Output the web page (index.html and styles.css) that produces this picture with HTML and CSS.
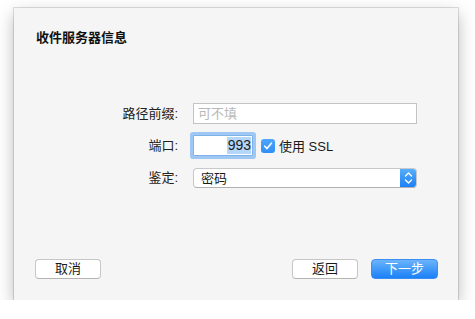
FILE: index.html
```html
<!DOCTYPE html>
<html lang="zh">
<head>
<meta charset="utf-8">
<link rel="stylesheet" href="styles.css">
</head>
<body>
<div class="sheet">
  <h1 class="title">收件服务器信息</h1>
  <div class="form">
    <label class="label">路径前缀:</label>
    <div class="field"><input class="text-input" type="text" placeholder="可不填"></div>
    <label class="label">端口:</label>
    <div class="field port-row">
      <div class="port-box"><span class="sel">993</span></div>
      <span class="check">
        <svg width="10" height="10" viewBox="0 0 10 10"><path d="M1.8 5.2 L4 7.6 L8.4 2.2" fill="none" stroke="#fff" stroke-width="1.6" stroke-linecap="round" stroke-linejoin="round"/></svg>
      </span>
      <span class="check-label">使用 SSL</span>
    </div>
    <label class="label">鉴定:</label>
    <div class="field">
      <div class="select">
        <span class="select-value">密码</span>
        <span class="select-arrows">
          <svg width="9" height="14" viewBox="0 0 9 14"><path d="M1.5 5 L4.5 2 L7.5 5 M1.5 9 L4.5 12 L7.5 9" fill="none" stroke="#fff" stroke-width="1.3" stroke-linecap="round" stroke-linejoin="round"/></svg>
        </span>
      </div>
    </div>
  </div>
  <div class="footer">
    <button class="btn">取消</button>
    <div class="spacer"></div>
    <button class="btn">返回</button>
    <button class="btn primary">下一步</button>
  </div>
</div>
</body>
</html>
```
FILE: styles.css
```css
html, body {
  margin: 0;
  padding: 0;
  background: #ffffff;
}
body {
  font-family: "Liberation Sans", "Noto Sans CJK SC", sans-serif;
  font-size: 13px;
  color: #1a1a1a;
  padding: 8px 0 0 14px;
}
.sheet {
  box-sizing: border-box;
  width: 444px;
  height: 292px;
  background: #f5f5f5;
  box-shadow: 0 0 0 1px rgba(0,0,0,0.12), 0 6px 16px rgba(0,0,0,0.28);
  display: flex;
  flex-direction: column;
  padding: 22px 20px 21px 21px;
}
.title {
  margin: 0;
  font-size: 13px;
  font-weight: bold;
  line-height: 16px;
  padding-left: 1px;
  color: #111;
}
.form {
  margin-top: 57px;
  margin-left: -7px;
  display: grid;
  grid-template-columns: 150px 224px;
  column-gap: 15px;
  row-gap: 11px;
  grid-auto-rows: 21px;
}
.label {
  text-align: right;
  line-height: 21px;
  color: #222;
}
.field {
  display: flex;
  align-items: center;
}
.text-input {
  box-sizing: border-box;
  width: 224px;
  height: 21px;
  border: 1px solid #c3c3c3;
  background: #fff;
  font: inherit;
  padding: 0 4px;
  outline: none;
  margin: 0;
}
.text-input::placeholder {
  color: #b8b8b8;
}
.port-box {
  box-sizing: border-box;
  width: 60px;
  height: 21px;
  background: #fff;
  border: 1px solid #7fb2ea;
  box-shadow: 0 0 0 3px rgba(88,160,240,0.55);
  border-radius: 1px;
  display: flex;
  justify-content: flex-end;
  align-items: center;
  padding-right: 1px;
  font-size: 14px;
}
.sel {
  background: #b4d6fb;
  line-height: 17px;
  padding: 0 0 0 1px;
}
.check {
  margin-left: 8px;
  width: 14px;
  height: 14px;
  border-radius: 3px;
  background: linear-gradient(#4ea6fd, #2f8ef7);
  display: flex;
  align-items: center;
  justify-content: center;
}
.check-label {
  margin-left: 4px;
  color: #1a1a1a;
  font-size: 13px;
}
.select {
  box-sizing: border-box;
  width: 224px;
  height: 20px;
  background: #fff;
  border: 1px solid #c8c8c8;
  border-bottom-color: #b0b0b0;
  border-radius: 4px;
  display: flex;
  align-items: center;
  overflow: hidden;
}
.select-value {
  flex: 1;
  padding-left: 7px;
}
.select-arrows {
  width: 16px;
  height: 100%;
  background: linear-gradient(#58aefb, #1b7ff6);
  display: flex;
  align-items: center;
  justify-content: center;
}
.footer {
  margin-top: auto;
  display: flex;
  align-items: center;
}
.spacer {
  flex: 1;
}
.btn {
  box-sizing: border-box;
  width: 66px;
  height: 20px;
  background: #fff;
  border: 1px solid #c6c6c6;
  border-bottom-color: #b4b4b4;
  border-radius: 4px;
  font: inherit;
  color: #1a1a1a;
  padding: 0;
  margin: 0;
  line-height: 18px;
}
.btn + .btn {
  margin-left: 13px;
}
.btn.primary {
  width: 67px;
  border: 1px solid #3d8ef3;
  background: linear-gradient(#6ab4fb, #1b80f8);
  color: #fff;
}
```
